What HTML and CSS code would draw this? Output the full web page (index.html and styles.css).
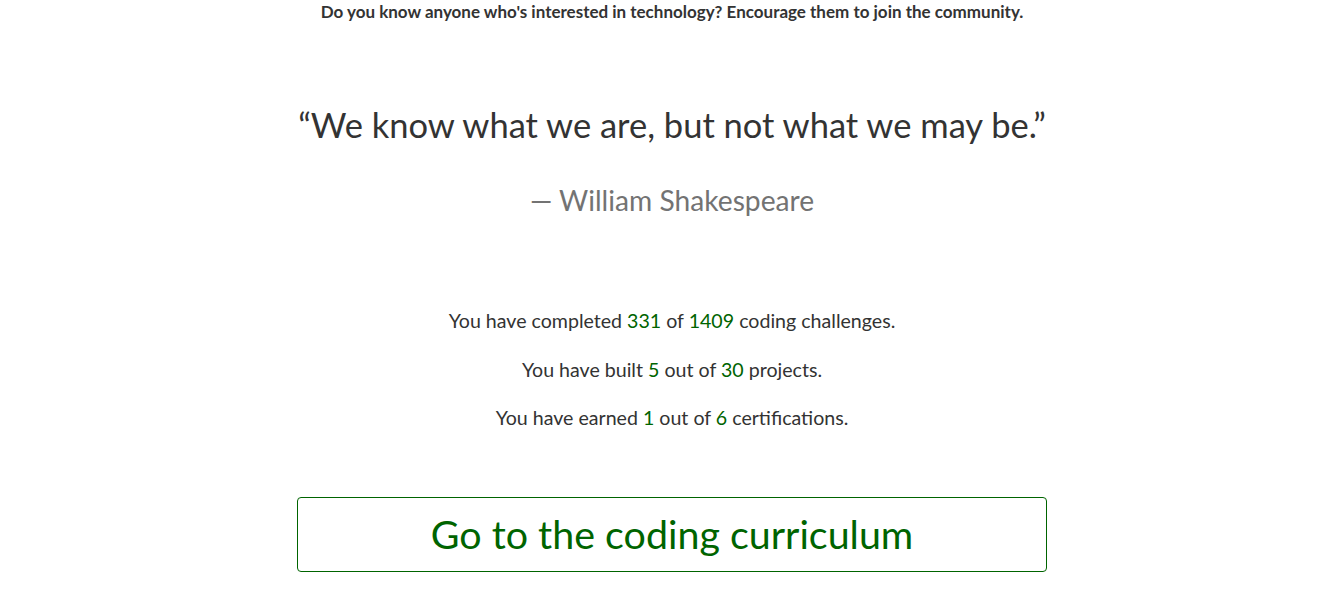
FILE: index.html
```html
<!DOCTYPE html>
<html lang="en">
<head>
<meta charset="utf-8">
<title>Welcome</title>
<link rel="stylesheet" href="styles.css">
</head>
<body>
<main class="page">
  <div class="container">
    <p class="invite">Do you know anyone who's interested in technology? Encourage them to join the community.</p>
    <blockquote class="quote">
      <p class="quote-text">“We know what we are, but not what we may be.”</p>
      <footer class="quote-author">— William Shakespeare</footer>
    </blockquote>
    <div class="stats">
      <p>You have completed <span class="num">331</span> of <span class="num">1409</span> coding challenges.</p>
      <p>You have built <span class="num">5</span> out of <span class="num">30</span> projects.</p>
      <p>You have earned <span class="num">1</span> out of <span class="num">6</span> certifications.</p>
    </div>
    <a class="cta" href="#">Go to the coding curriculum</a>
  </div>
</main>
</body>
</html>
```

FILE: styles.css
```css
* { box-sizing: border-box; }
html, body { margin: 0; padding: 0; background: #fff; }
body {
  font-family: Lato, "Noto Sans", sans-serif;
  color: #333;
}
.page {
  display: flex;
  justify-content: center;
  padding-left: 15px;
}
.container {
  width: 750px;
  display: flex;
  flex-direction: column;
  align-items: center;
  text-align: center;
}
.invite {
  margin: 0;
  padding-top: 2px;
  font-weight: 700;
  font-size: 17px;
  line-height: 20px;
  color: #333;
  white-space: nowrap;
}
.quote {
  margin: 78px 0 0;
  padding: 0;
}
.quote-text {
  margin: 0;
  font-size: 34.5px;
  line-height: 50px;
  color: #333;
  white-space: nowrap;
}
.quote-author {
  margin-top: 33px;
  font-size: 28.2px;
  line-height: 34px;
  color: #737373;
}
.stats {
  margin-top: 91px;
  display: flex;
  flex-direction: column;
  gap: 23.5px;
}
.stats p {
  margin: 0;
  font-size: 19.6px;
  line-height: 25px;
}
.num { color: #006400; }
.cta {
  margin-top: 67px;
  width: 750px;
  height: 75px;
  padding-bottom: 2px;
  display: flex;
  align-items: center;
  justify-content: center;
  border: 1px solid #006400;
  border-radius: 4px;
  color: #006400;
  text-decoration: none;
  font-size: 39.4px;
}
```
